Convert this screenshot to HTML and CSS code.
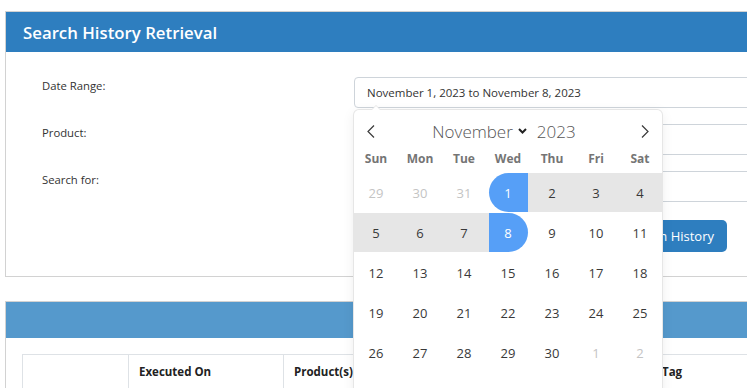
FILE: index.html
```html
<!DOCTYPE html>
<html lang="en">
<head>
<meta charset="utf-8">
<title>Search History Retrieval</title>
<link rel="stylesheet" href="styles.css">
</head>
<body>
<div class="page">
  <section class="card">
    <div class="card-head">Search History Retrieval</div>
    <div class="form">
      <label class="lbl">Date Range:</label>
      <div class="input">November 1, 2023 to November 8, 2023</div>
      <label class="lbl">Product:</label>
      <div class="input"></div>
      <label class="lbl">Search for:</label>
      <div class="input"></div>
      <div class="btn-row"><button class="btn">Search History</button></div>
    </div>
  </section>

  <section class="card card-results">
    <div class="card-head light"></div>
    <div class="results-body">
      <table class="tbl">
        <colgroup>
          <col class="c1"><col class="c2"><col class="c3"><col class="c4"><col class="c5">
        </colgroup>
        <thead>
          <tr><th></th><th>Executed On</th><th>Product(s)</th><th>Search Criteria</th><th>Tag</th></tr>
        </thead>
        <tbody>
          <tr><td></td><td></td><td></td><td></td><td></td></tr>
        </tbody>
      </table>
    </div>
  </section>
</div>

<div class="fp">
  <div class="fp-months">
    <svg class="fp-arrow" width="8" height="13" viewBox="0 0 8 13"><path d="M7 0.5 L1 6.5 L7 12.5" fill="none" stroke="#3a3a3a" stroke-width="1.2"/></svg>
    <div class="fp-current">
      <span class="fp-month">November</span>
      <svg class="fp-caret" width="9" height="6" viewBox="0 0 9 6"><path d="M1 1 L4.5 4.5 L8 1" fill="none" stroke="#222" stroke-width="2"/></svg>
      <span class="fp-year">2023</span>
    </div>
    <svg class="fp-arrow" width="8" height="13" viewBox="0 0 8 13"><path d="M1 0.5 L7 6.5 L1 12.5" fill="none" stroke="#3a3a3a" stroke-width="1.2"/></svg>
  </div>
  <div class="fp-weekdays">
    <span>Sun</span><span>Mon</span><span>Tue</span><span>Wed</span><span>Thu</span><span>Fri</span><span>Sat</span>
  </div>
  <div class="fp-days">
    <span class="d muted">29</span><span class="d muted">30</span><span class="d muted">31</span>
    <span class="d start"><b>1</b></span><span class="d range">2</span><span class="d range">3</span><span class="d range">4</span>
    <span class="d range">5</span><span class="d range">6</span><span class="d range">7</span>
    <span class="d end"><b>8</b></span><span class="d">9</span><span class="d">10</span><span class="d">11</span>
    <span class="d">12</span><span class="d">13</span><span class="d">14</span><span class="d">15</span><span class="d">16</span><span class="d">17</span><span class="d">18</span>
    <span class="d">19</span><span class="d">20</span><span class="d">21</span><span class="d">22</span><span class="d">23</span><span class="d">24</span><span class="d">25</span>
    <span class="d">26</span><span class="d">27</span><span class="d">28</span><span class="d">29</span><span class="d">30</span><span class="d muted">1</span><span class="d muted">2</span>
    <span class="d muted">3</span><span class="d muted">4</span><span class="d muted">5</span><span class="d muted">6</span><span class="d muted">7</span><span class="d muted">8</span><span class="d muted">9</span>
  </div>
</div>
</body>
</html>
```
FILE: styles.css
```css
html, body {
  margin: 0;
  padding: 0;
  overflow: hidden;
  background: #fff;
}
body {
  position: relative;
  width: 747px;
  height: 388px;
  font-family: "Open Sans", "Noto Sans", sans-serif;
  color: #333;
}
.page {
  padding: 11px 0 0 5px;
}
.card {
  width: 900px;
  border: 1px solid #d2d2d2;
  background: #fff;
}
.card-head {
  height: 40px;
  background: #2e7ebf;
  color: #fff;
  font-weight: 600;
  font-size: 16.8px;
  padding-left: 17px;
  display: flex;
  align-items: center;
}
.card-head.light {
  height: 36px;
  background: #5599cc;
}
.form {
  display: grid;
  grid-template-columns: 312px 1fr;
  row-gap: 16px;
  padding: 25px 0 24px 36px;
}
.lbl {
  font-size: 11.3px;
  line-height: 16px;
  padding-top: 1px;
  color: #333;
}
.input {
  height: 31px;
  box-sizing: border-box;
  border: 1px solid #ced4da;
  border-radius: 4px;
  padding: 0 12px;
  font-size: 11.5px;
  display: flex;
  align-items: center;
  color: #333;
}
.btn-row {
  grid-column: 2;
  width: 373px;
  display: flex;
  justify-content: flex-end;
  margin-top: 2px;
}
.btn {
  height: 32px;
  padding: 0 13px;
  background: #2e7ebf;
  color: #fff;
  border: 0;
  border-radius: 5px;
  font-family: "Open Sans", "Noto Sans", sans-serif;
  font-size: 13px;
}
.card-results {
  margin-top: 24px;
}
.results-body {
  padding: 16px 0 0 16px;
}
.tbl {
  border-collapse: collapse;
  table-layout: fixed;
  width: 800px;
}
.c1 { width: 106px; }
.c2 { width: 155px; }
.c3 { width: 190px; }
.c4 { width: 178px; }
.c5 { width: 171px; }
.tbl th, .tbl td {
  border: 1px solid #dee2e6;
  text-align: left;
  padding: 8px 10px;
  font-size: 11.5px;
  line-height: 18px;
  color: #222;
  height: 18px;
}
.tbl th {
  font-weight: 700;
}

/* flatpickr-like calendar overlay */
.fp {
  position: absolute;
  left: 354px;
  top: 110px;
  width: 308px;
  height: 300px;
  box-sizing: border-box;
  padding-top: 4px;
  background: #fff;
  border-radius: 5px;
  box-shadow: 0 0 0 1px #e6e6e6, 0 3px 13px rgba(0, 0, 0, 0.08);
  z-index: 10;
}
.fp::before,
.fp::after {
  content: "";
  position: absolute;
  left: 22px;
  bottom: 100%;
  border: solid transparent;
  height: 0;
  width: 0;
}
.fp::before {
  border-width: 5px;
  margin-left: -5px;
  border-bottom-color: #e6e6e6;
}
.fp::after {
  border-width: 4px;
  margin-left: -4px;
  border-bottom-color: #fff;
}
.fp-months {
  height: 34px;
  display: flex;
  align-items: center;
  justify-content: space-between;
  padding: 0 13px;
}
.fp-current {
  display: flex;
  align-items: center;
  margin-left: -8px;
  color: #555;
  font-weight: 300;
  font-size: 17px;
}
.fp-caret {
  margin: 0 10px 0 5px;
}
.fp-weekdays {
  display: grid;
  grid-template-columns: repeat(7, 1fr);
  height: 20px;
  align-items: center;
  text-align: center;
  font-size: 12px;
  font-weight: 700;
  color: #757575;
}
.fp-days {
  margin-top: 5px;
  display: grid;
  grid-template-columns: repeat(7, 1fr);
  grid-auto-rows: 39px;
  row-gap: 1px;
  font-size: 13px;
  color: #393939;
}
.d {
  display: flex;
  align-items: center;
  justify-content: center;
}
.d.muted {
  color: #c4c4c4;
}
.d.range {
  background: #e6e6e6;
}
.d b {
  font-weight: 400;
  width: 39px;
  height: 39px;
  display: flex;
  align-items: center;
  justify-content: center;
  background: #569ff7;
  color: #fff;
}
.d.start {
  background: linear-gradient(to right, transparent 50%, #e6e6e6 50%);
}
.d.start b {
  border-radius: 50px 0 0 50px;
}
.d.end {
  background: linear-gradient(to right, #e6e6e6 50%, transparent 50%);
}
.d.end b {
  border-radius: 0 50px 50px 0;
}
```
